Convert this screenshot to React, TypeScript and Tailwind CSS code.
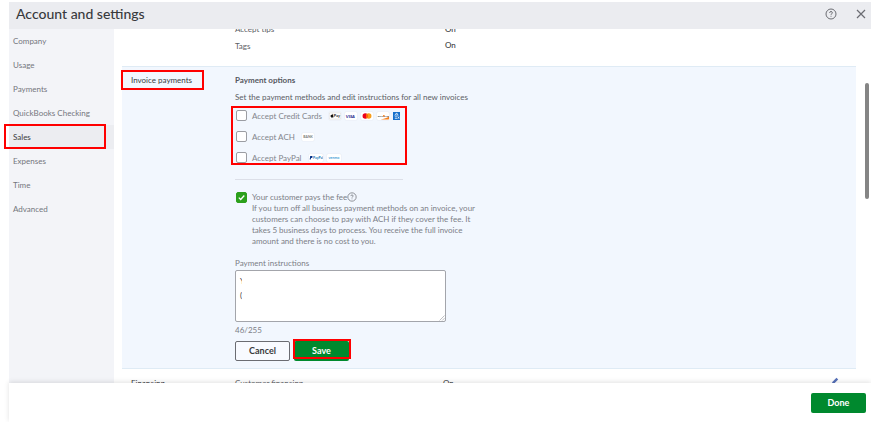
import { useState } from "react";
import type { ReactNode } from "react";

const sections = [
  "Company",
  "Usage",
  "Payments",
  "QuickBooks Checking",
  "Sales",
  "Expenses",
  "Time",
  "Advanced",
];

function Highlight({ className }: { className: string }) {
  return (
    <span
      aria-hidden="true"
      className={`pointer-events-none absolute border-2 border-[#ff0000] ${className}`}
    />
  );
}

function HelpIcon({ className }: { className: string }) {
  return (
    <svg viewBox="0 0 12 12" className={className} fill="none" stroke="currentColor">
      <circle cx="6" cy="6" r="5" />
      <path d="M4.6 4.9c0-.9.6-1.4 1.4-1.4s1.4.5 1.4 1.3c0 1-1.4 1-1.4 2" />
      <path d="M6 7.8v.9" />
    </svg>
  );
}

function Brand({ children, wide }: { children: ReactNode; wide?: boolean }) {
  return (
    <svg
      viewBox="0 0 14 8"
      className={`h-2 shrink-0 rounded-[1px] bg-white shadow-[0_0_1px_#c9ccd2] ${wide ? "w-3.5" : "w-3"}`}
    >
      {children}
    </svg>
  );
}

function ApplePay() {
  return (
    <Brand>
      <rect x=".3" y=".3" width="13.4" height="7.4" rx="1" fill="#fff" stroke="#aaa" strokeWidth=".3" />
      <path d="M3.6 2.6c.8-.5 1.6 0 1.6.3-.8.5-.6 1.6.2 1.9-.5 1.3-1 1.2-1.7.9-.7.3-1.2.2-1.7-.9-.5-1.3.2-2.6 1.6-2.2zM3.5 2.3c0-.6.5-1 .9-1 0 .6-.4 1-.9 1z" fill="#111" />
      <text x="5.6" y="5.6" fontSize="4.4" fontWeight="700" fill="#222">Pay</text>
    </Brand>
  );
}

function Visa() {
  return (
    <Brand>
      <text x="1" y="5.8" fontSize="5" fontWeight="900" fontStyle="italic" fill="#1a1f8c">VISA</text>
    </Brand>
  );
}

function Mastercard() {
  return (
    <Brand>
      <circle cx="5" cy="4" r="3.2" fill="#eb001b" />
      <circle cx="9" cy="4" r="3.2" fill="#f79e1b" />
      <path d="M7 1.5a3.2 3.2 0 0 1 0 5a3.2 3.2 0 0 1 0-5z" fill="#ff5f00" />
    </Brand>
  );
}

function Discover() {
  return (
    <Brand>
      <path d="M14 4.5V8H4c4-.5 8-2 10-3.5z" fill="#f58220" />
      <text x=".8" y="4.8" fontSize="2.9" fontWeight="700" fill="#444">DISCOVER</text>
      <circle cx="8" cy="3.8" r="1.1" fill="#f58220" />
    </Brand>
  );
}

function Amex() {
  return (
    <svg viewBox="0 0 8 8" className="size-2 shrink-0">
      <rect width="7" height="8" fill="#1670cc" />
      <path d="M1.8 3.6 3 1.4h1.2l1 2.2M1.8 4.8h2.6M1.8 6.4h2.6M5 4.6l1.2 2M6.2 4.6 5 6.6M2.4 3h2.4" stroke="#fff" strokeWidth=".7" fill="none" />
    </svg>
  );
}

function Option({ label, children }: { label: string; children: ReactNode }) {
  return (
    <div className="flex h-[21px] items-center pl-px">
      <label className="flex items-center gap-[5px] text-[#83858c]">
        <input
          type="checkbox"
          className="size-[11px] appearance-none rounded-[2px] border border-[#9b9da3] bg-white"
        />
        {label}
      </label>
      <span className="ml-[7px] flex items-center gap-1">{children}</span>
    </div>
  );
}

export default function App() {
  const [note, setNote] = useState("Y\n(");
  const [customerPays, setCustomerPays] = useState(true);

  return (
    <div className="flex h-screen flex-col bg-white pt-0.5 pl-[9px] font-['Lato','Liberation_Sans',sans-serif] text-[8px] leading-[12px] text-[#5c5e65]">
      <header className="flex h-[27px] shrink-0 items-center justify-between bg-[#ebecf0] pr-[5px] pb-1 pl-[7px]">
        <h1 className="text-[14px] leading-4 font-medium text-[#393a3d]">Account and settings</h1>
        <div className="flex items-center gap-[19px] text-[#6b6c72]">
          <button type="button" aria-label="Help">
            <HelpIcon className="size-3" />
          </button>
          <button type="button" aria-label="Close">
            <svg viewBox="0 0 10 10" className="size-2.5" fill="none" stroke="currentColor" strokeWidth="1.2">
              <path d="m1 1 8 8M9 1 1 9" />
            </svg>
          </button>
        </div>
      </header>

      <div className="flex min-h-0 flex-1">
        <nav className="w-[105px] shrink-0 bg-[#f3f4f8]">
          <ul>
            {sections.map((name) => (
              <li key={name} className={name === "Sales" ? "relative bg-[#ecedf1]" : ""}>
                <a
                  href="#"
                  aria-current={name === "Sales" ? "page" : undefined}
                  className={`flex h-6 items-center pb-px pl-1 ${name === "Sales" ? "text-[#393a3d]" : "text-[#74767d]"}`}
                >
                  {name}
                </a>
                {name === "Sales" && <Highlight className="-top-px right-2 bottom-0 -left-[5px]" />}
              </li>
            ))}
          </ul>
        </nav>

        <main className="flex min-w-0 flex-1 overflow-hidden pl-2">
          <div className="min-w-0 flex-1">
            <dl className="-mt-1.5 grid grid-cols-[210px_1fr] gap-y-0.5 pb-3.5 pl-[113px]">
              <dt>Accept tips</dt>
              <dd className="font-medium text-[#393a3d]">On</dd>
              <dt className="pt-[3px]">Tags</dt>
              <dd className="pt-0.5 font-medium text-[#393a3d]">On</dd>
            </dl>

            <section className="flex border-y border-[#dfebf5] bg-[#f2f7fe] px-[9px] pt-[7px] pb-[7px]">
              <h2 className="relative w-[104px] shrink-0 self-start text-[#393a3d]">
                Invoice payments
                <Highlight className="-top-1 right-[31px] -bottom-1 -left-[10px]" />
              </h2>
              <div className="min-w-0">
                <h3 className="font-bold text-[#55575e]">Payment options</h3>
                <p className="mt-[5px]">Set the payment methods and edit instructions for all new invoices</p>

                <div className="relative mt-0.5 w-[168px] border-b border-[#dcdfe8] pb-[11px]">
                  <Option label="Accept Credit Cards">
                    <ApplePay />
                    <Visa />
                    <Mastercard />
                    <Discover />
                    <Amex />
                  </Option>
                  <Option label="Accept ACH">
                    <Brand>
                      <text x="1.6" y="5.4" fontSize="4" fontWeight="700" fill="#777">BANK</text>
                    </Brand>
                  </Option>
                  <Option label="Accept PayPal">
                    <Brand wide>
                      <path d="M1.2 2h1.6c1.3 0 1 2-.4 2H2l-.3 1.6h-1z" fill="#003087" />
                      <text x="4" y="5.3" fontSize="3.4" fontWeight="700" fill="#1474b8">PayPal</text>
                    </Brand>
                    <Brand wide>
                      <text x="1.4" y="5.2" fontSize="3.6" fontWeight="700" fill="#45a0d8">venmo</text>
                    </Brand>
                  </Option>
                  <Highlight className="top-px -right-1 bottom-3.5 -left-1" />
                </div>

                <div className="mt-[11px] flex gap-[5px] pl-px text-[#7c7e86]">
                  <span className="relative mt-px size-[11px] shrink-0">
                    <input
                      id="customer-pays"
                      type="checkbox"
                      checked={customerPays}
                      onChange={(e) => setCustomerPays(e.target.checked)}
                      className="peer block size-[11px] appearance-none rounded-[2px] border border-[#9b9da3] bg-white checked:border-[#2ca01c] checked:bg-[#2ca01c]"
                    />
                    <svg
                      viewBox="0 0 11 11"
                      className="pointer-events-none absolute inset-0 hidden peer-checked:block"
                      fill="none"
                      stroke="#fff"
                      strokeWidth="1.3"
                    >
                      <path d="m2.8 5.6 1.9 1.9 3.6-4" />
                    </svg>
                  </span>
                  <div className="w-[226px]">
                    <div className="flex items-center">
                      <label htmlFor="customer-pays">Your customer pays the fee</label>
                      <HelpIcon className="size-2.5" />
                    </div>
                    <p className="leading-[11px]">
                      If you turn off all business payment methods on an invoice, your customers can choose to
                      pay with ACH if they cover the fee. It takes 5 business days to process. You receive the
                      full invoice amount and there is no cost to you.
                    </p>
                  </div>
                </div>

                <label htmlFor="instructions" className="mt-2.5 block text-[#7c7e86]">
                  Payment instructions
                </label>
                <div className="relative mt-px w-[211px]">
                  <textarea
                    id="instructions"
                    value={note}
                    onChange={(e) => setNote(e.target.value)}
                    className="block h-[52px] w-full resize-none rounded-[2px] border border-[#a3a5ab] bg-white px-1 py-[3px] leading-[14px] text-[#393a3d]"
                  />
                  <span className="pointer-events-none absolute top-1 left-[7px] h-8 w-24 bg-white" />
                  <svg
                    viewBox="0 0 6 6"
                    className="pointer-events-none absolute right-px bottom-px size-1.5"
                    stroke="#a3a5ab"
                    strokeWidth=".7"
                  >
                    <path d="M.5 5.5l5-5M3.2 5.5l2.3-2.3" />
                  </svg>
                </div>
                <p className="mt-0.5 text-[#7c7e86]">46/255</p>

                <div className="mt-[5px] flex gap-1 text-[9px] font-bold">
                  <button
                    type="button"
                    className="h-5 w-[55px] rounded-[2px] border border-[#6b6c72] bg-[#f8faff] text-[#393a3d]"
                  >
                    Cancel
                  </button>
                  <button type="button" className="relative h-5 w-[55px] rounded-[2px] bg-[#00892e] text-white">
                    Save
                    <Highlight className="-top-0.5 -right-0.5 bottom-0.5 -left-px" />
                  </button>
                </div>
              </div>
            </section>

            <div className="flex px-[9px] pt-2">
              <h2 className="w-[104px] shrink-0 text-[#393a3d]">Financing</h2>
              <span className="w-[208px] shrink-0">Customer financing</span>
              <span className="flex-1 text-[#393a3d]">On</span>
              <button type="button" aria-label="Edit financing" className="self-start pr-2 text-[#5570b8]">
                <svg viewBox="0 0 8 8" className="size-2" fill="currentColor">
                  <path d="m5.5.8 1.7 1.7L3 6.7l-2.2.5.5-2.2z" />
                </svg>
              </button>
            </div>
          </div>
          <div className="flex w-[15px] shrink-0 flex-col pt-[54px] pl-[9px]">
            <div className="h-[116px] w-1 rounded-sm bg-[#858585]" />
          </div>
        </main>
      </div>

      <footer className="relative flex h-[39px] shrink-0 items-center justify-end bg-white pr-[5px] shadow-[0_-1px_5px_#0000001f]">
        <button type="button" className="h-5 w-[55px] rounded-[2px] bg-[#00892e] text-[9px] font-bold text-white">
          Done
        </button>
      </footer>
    </div>
  );
}
